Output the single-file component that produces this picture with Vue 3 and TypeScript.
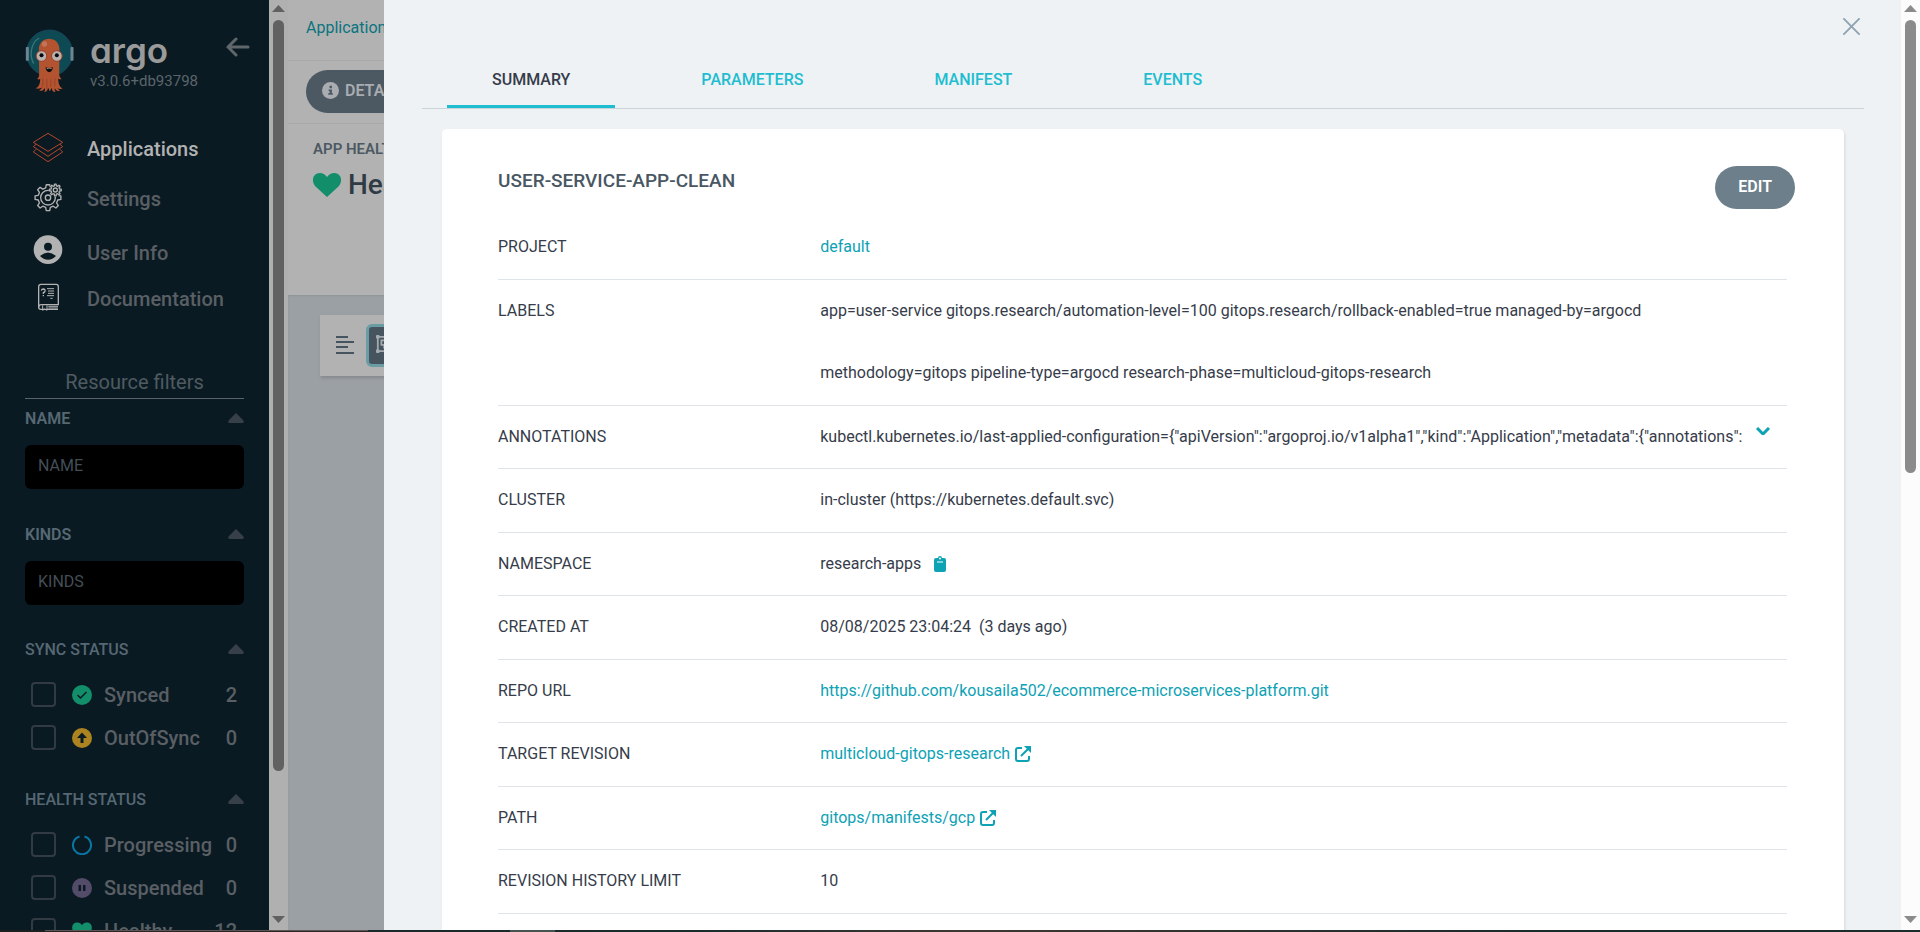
<script setup lang="ts">
import { ref } from 'vue'

interface StatusItem {
  name: string
  count: number
  icon: 'synced' | 'outofsync' | 'progressing' | 'suspended' | 'healthy'
}

interface DetailRow {
  label: string
  text: string
  href?: string
  icon?: 'copy' | 'external' | 'expand'
}

const name = ref('')
const kinds = ref('')
const activeTab = ref('SUMMARY')
const tabs = ['SUMMARY', 'PARAMETERS', 'MANIFEST', 'EVENTS']

const syncStatus: StatusItem[] = [
  { name: 'Synced', count: 2, icon: 'synced' },
  { name: 'OutOfSync', count: 0, icon: 'outofsync' },
]
const healthStatus: StatusItem[] = [
  { name: 'Progressing', count: 0, icon: 'progressing' },
  { name: 'Suspended', count: 0, icon: 'suspended' },
  { name: 'Healthy', count: 12, icon: 'healthy' },
]
const groups = [
  { title: 'SYNC STATUS', items: syncStatus },
  { title: 'HEALTH STATUS', items: healthStatus },
]

const rows: DetailRow[] = [
  { label: 'PROJECT', text: 'default', href: '#project' },
  {
    label: 'LABELS',
    text: 'app=user-service gitops.research/automation-level=100 gitops.research/rollback-enabled=true managed-by=argocd methodology=gitops pipeline-type=argocd research-phase=multicloud-gitops-research',
  },
  {
    label: 'ANNOTATIONS',
    text: 'kubectl.kubernetes.io/last-applied-configuration={"apiVersion":"argoproj.io/v1alpha1","kind":"Application","metadata":{"annotations":',
    icon: 'expand',
  },
  { label: 'CLUSTER', text: 'in-cluster (https://kubernetes.default.svc)' },
  { label: 'NAMESPACE', text: 'research-apps', icon: 'copy' },
  { label: 'CREATED AT', text: '08/08/2025 23:04:24\u00a0 (3 days ago)' },
  {
    label: 'REPO URL',
    text: 'https://github.com/kousaila502/ecommerce-microservices-platform.git',
    href: '#repo',
  },
  { label: 'TARGET REVISION', text: 'multicloud-gitops-research', href: '#revision', icon: 'external' },
  { label: 'PATH', text: 'gitops/manifests/gcp', href: '#path', icon: 'external' },
  { label: 'REVISION HISTORY LIMIT', text: '10' },
]

function gearPath(cx: number, cy: number, outer: number, inner: number, teeth: number): string {
  const step = (Math.PI * 2) / teeth
  const points: string[] = []
  for (let i = 0; i < teeth; i++) {
    const a = i * step - Math.PI / 2
    const corners: [number, number][] = [
      [inner, -0.3],
      [outer, -0.17],
      [outer, 0.17],
      [inner, 0.3],
    ]
    for (const [r, f] of corners) {
      points.push(`${(cx + r * Math.cos(a + f * step)).toFixed(1)} ${(cy + r * Math.sin(a + f * step)).toFixed(1)}`)
    }
  }
  return `M${points.join('L')}Z`
}
</script>

<template>
  <div class="page">
    <div class="workspace">
      <aside class="sidebar">
        <div class="brand">
          <svg class="mascot" viewBox="74 56 146 192" aria-hidden="true">
            <circle cx="147" cy="128" r="69" fill="#0d4a54" stroke="#1b4658" stroke-width="3" />
            <rect x="76" y="110" width="9" height="41" rx="2" fill="#6e8494" />
            <rect x="210" y="110" width="9" height="41" rx="2" fill="#6e8494" />
            <path d="M116 83C90 98 86 138 100 160" fill="none" stroke="#3d7476" stroke-width="4" />
            <path d="M115 120C113 74 179 74 177 120L176 194C178 202 182 205 183 206C177 209 174 205 173 205C174 225 180 231 187 234C180 238 174 235 171 232C173 236 175 239 179 241C171 244 166 240 163 234C162 240 164 243 165 245C157 245 154 240 154 232L148 243L143 232C141 240 138 244 132 245C134 240 134 237 133 233C129 240 123 243 116 241C121 238 123 235 124 231C118 236 112 236 105 234C114 230 119 223 119 205C117 208 113 208 110 205C114 203 116 198 116 192Z" fill="#b4532f" />
            <path d="M127 204V229M139 206V235M151 207V230M163 204V228" fill="none" stroke="#8d3d25" stroke-width="2" />
            <ellipse cx="132" cy="101" rx="8" ry="8" fill="#c4745a" />
            <circle cx="123" cy="137" r="16" fill="#b7b0ad" stroke="#993f2a" stroke-width="3" />
            <circle cx="169" cy="137" r="16" fill="#b7b0ad" stroke="#993f2a" stroke-width="3" />
            <circle cx="123" cy="135" r="6" fill="#05090b" />
            <circle cx="169" cy="135" r="6" fill="#05090b" />
            <path d="M135 170Q146 176 157 170Q156 185 146 186Q137 185 135 170Z" fill="#100f10" />
            <path d="M139 172Q146 177 153 172V176H139Z" fill="#b2b2b2" />
          </svg>
          <div class="brand-text">
            <span class="wordmark">argo</span>
            <span class="version">v3.0.6+db93798</span>
          </div>
          <button class="collapse" type="button" aria-label="Collapse sidebar">
            <svg viewBox="0 0 24 20"><path d="M22 10H2M10 2L2 10L10 18" /></svg>
          </button>
        </div>

        <nav class="nav">
          <a class="nav-item active" href="#applications">
            <svg viewBox="96 393 96 108" aria-hidden="true">
              <g fill="none" stroke="#b4472b" stroke-width="3" stroke-linejoin="round">
                <path d="M144 400L188 427L144 454L100 427Z" />
                <path d="M108 433L100 440L144 469L188 440L180 433" />
                <path d="M108 448L100 456L144 485L188 456L180 448" />
              </g>
            </svg>
            <span>Applications</span>
          </a>
          <a class="nav-item" href="#settings">
            <svg viewBox="96 543 96 108" aria-hidden="true">
              <g fill="none" stroke="#b2b2b2" stroke-width="4" stroke-linejoin="round">
                <path :d="gearPath(144, 593, 39, 30, 8)" />
                <circle cx="144" cy="593" r="22" />
                <circle cx="144" cy="593" r="8" />
                <circle cx="166" cy="570" r="20" fill="#0a1a22" stroke="none" />
                <path :d="gearPath(166, 570, 18, 13, 8)" fill="#0a1a22" />
                <circle cx="166" cy="570" r="6" />
              </g>
            </svg>
            <span>Settings</span>
          </a>
          <a class="nav-item tall" href="#user">
            <svg viewBox="96 705 96 108" aria-hidden="true">
              <circle cx="144" cy="749" r="43" fill="#b2b2b2" />
              <circle cx="144" cy="740" r="12" fill="#0a1a22" />
              <path d="M120 768Q144 747 168 768Q158 779 144 779Q130 779 120 768Z" fill="#0a1a22" />
            </svg>
            <span>User Info</span>
          </a>
          <a class="nav-item short" href="#docs">
            <svg viewBox="96 843 96 108" aria-hidden="true">
              <g fill="none" stroke="#b2b2b2" stroke-width="4">
                <path d="M174 928H122Q116 928 116 921V860Q116 853 123 853H169Q175 853 175 860V914H124Q117 914 117 920" />
                <path d="M145 919H174M145 924H174M128 916V931L134 927L141 931V916" stroke-width="3" />
                <path d="M141 866H162M144 873H162M144 880H162M141 887H162M151 895H158" stroke-width="3" />
                <path d="M124 872Q125 867 130 867Q136 868 135 873Q134 877 130 878V882M130 885V889" />
              </g>
            </svg>
            <span>Documentation</span>
          </a>
        </nav>

        <h2 class="filters-title">Resource filters</h2>

        <section class="filter">
          <div class="filter-head">
            <label for="filter-name">NAME</label>
            <svg viewBox="0 0 16 10" aria-hidden="true"><path d="M8 0L15 7Q17 10 14 10H2Q-1 10 1 7Z" /></svg>
          </div>
          <input id="filter-name" v-model="name" class="filter-input" type="text" placeholder="NAME" />
        </section>
        <section class="filter">
          <div class="filter-head">
            <label for="filter-kinds">KINDS</label>
            <svg viewBox="0 0 16 10" aria-hidden="true"><path d="M8 0L15 7Q17 10 14 10H2Q-1 10 1 7Z" /></svg>
          </div>
          <input id="filter-kinds" v-model="kinds" class="filter-input" type="text" placeholder="KINDS" />
        </section>

        <section v-for="group in groups" :key="group.title" class="status-group">
          <div class="filter-head">
            <h3>{{ group.title }}</h3>
            <svg viewBox="0 0 16 10" aria-hidden="true"><path d="M8 0L15 7Q17 10 14 10H2Q-1 10 1 7Z" /></svg>
          </div>
          <label v-for="item in group.items" :key="item.name" class="status-item">
            <input type="checkbox" />
            <svg viewBox="0 0 20 20" aria-hidden="true">
              <template v-if="item.icon === 'synced'">
                <circle cx="10" cy="10" r="10" fill="#128e6a" />
                <path d="M5.500 10L8.500 13L14.500 7" fill="none" stroke="#0a1a22" stroke-width="1.500" />
              </template>
              <template v-else-if="item.icon === 'outofsync'">
                <circle cx="10" cy="10" r="10" fill="#ab8421" />
                <path d="M10 4.500L15 10H11.500V15H8.500V10H5Z" fill="#0a1a22" />
              </template>
              <path
                v-else-if="item.icon === 'progressing'"
                d="M12.500 1.500A9 9 0 1 1 7.500 1.500"
                fill="none"
                stroke="#0977a6"
                stroke-width="2"
              />
              <template v-else-if="item.icon === 'suspended'">
                <circle cx="10" cy="10" r="10" fill="#534c69" />
                <path d="M6.500 7H9V13H6.500ZM11 7H13.500V13H11Z" fill="#0a1a22" />
              </template>
              <path
                v-else
                d="M10 19L1.500 10.500C-1 7.500 0 2 4.500 1.500C7 1 9 2.500 10 4C11 2.500 13 1 15.500 1.500C20 2 21 7.500 18.500 10.500Z"
                fill="#128e6a"
              />
            </svg>
            <span class="status-name">{{ item.name }}</span>
            <span class="status-count">{{ item.count }}</span>
          </label>
        </section>
      </aside>

      <div class="scrollbar dim">
        <svg viewBox="0 0 13 7" aria-hidden="true"><path d="M6.500 0L13 7H0Z" /></svg>
        <div class="track"><div class="thumb"></div></div>
        <svg viewBox="0 0 13 7" aria-hidden="true"><path d="M0 0H13L6.500 7Z" /></svg>
      </div>

      <main class="content">
        <div class="breadcrumb"><a href="#applications">Applications</a></div>
        <div class="actions">
          <button class="details" type="button">
            <svg viewBox="0 0 18 18" aria-hidden="true">
              <circle cx="9" cy="9" r="9" fill="#a9adb1" />
              <path d="M8 4H10.500V6.500H8ZM7 8H10.500V12H11.500V13.500H6.500V12H8V9.500H7Z" fill="#4c5963" />
            </svg>
            DETAILS
          </button>
        </div>
        <section class="health">
          <h3>APP HEALTH</h3>
          <p>
            <svg viewBox="0 0 28 24" aria-hidden="true">
              <path d="M14 24L2 13C-1 9 -1 4 3 1C7 -1 11 0 14 4C17 0 21 -1 25 1C29 4 29 9 26 13Z" fill="#128e6a" />
            </svg>
            Healthy
          </p>
        </section>
        <div class="canvas">
          <div class="toolbar">
            <button class="tool" type="button" aria-label="Compact view">
              <svg viewBox="0 0 18 18"><path d="M0 1H12M0 6H18M0 11H12M0 17H18" stroke="#46545f" stroke-width="2" /></svg>
            </button>
            <button class="tool selected" type="button" aria-label="Group nodes">
              <svg viewBox="0 0 20 20" fill="none" stroke="#a4a9ad" stroke-width="2">
                <path d="M2 2H18V18H2Z" /><path d="M6 6H12V11H6ZM9 11V14H15V9H12" />
                <path d="M0 2H4M0 18H4M2 0V4M2 16V20" stroke-width="3" />
              </svg>
            </button>
          </div>
        </div>
      </main>

      <div class="panel">
        <div class="panel-body">
          <div class="panel-top">
            <button class="close" type="button" aria-label="Close">
              <svg viewBox="0 0 18 18"><path d="M1 1L17 17M17 1L1 17" /></svg>
            </button>
          </div>
          <div class="tabs" role="tablist">
            <button
              v-for="tab in tabs"
              :key="tab"
              type="button"
              role="tab"
              class="tab"
              :class="{ current: tab === activeTab }"
              :aria-selected="tab === activeTab"
              @click="activeTab = tab"
            >
              {{ tab }}
            </button>
          </div>
          <section class="card">
            <header class="card-head">
              <h1>USER-SERVICE-APP-CLEAN</h1>
              <button class="edit" type="button">EDIT</button>
            </header>
            <dl class="rows">
              <div v-for="row in rows" :key="row.label" class="row" :class="{ clipped: row.icon === 'expand' }">
                <dt>{{ row.label }}</dt>
                <dd>
                  <a v-if="row.href" :href="row.href">{{ row.text }}</a>
                  <span v-else>{{ row.text }}</span>
                  <button v-if="row.icon === 'copy'" class="copy" type="button" aria-label="Copy namespace">
                    <svg viewBox="0 0 12 16">
                      <path d="M2 2H4A2 2 0 0 1 8 2H10Q12 2 12 4V14Q12 16 10 16H2Q0 16 0 14V4Q0 2 2 2Z" fill="#0da2b4" />
                      <path d="M3 6H9" stroke="#fff" /><circle cx="6" cy="2.500" r="1" fill="#fff" />
                    </svg>
                  </button>
                  <a v-if="row.icon === 'external'" class="external" :href="row.href" aria-label="Open in repository">
                    <svg viewBox="0 0 16 16">
                      <path d="M7 2H3Q1 2 1 4V13Q1 15 3 15H12Q14 15 14 13V10M6 10L13 3" fill="none" stroke="#0da2b4" stroke-width="2" />
                      <path d="M9 0H16V7L13.500 4.500L11.500 2.500Z" fill="#0da2b4" />
                    </svg>
                  </a>
                  <button v-if="row.icon === 'expand'" class="expand" type="button" aria-label="Expand annotations">
                    <svg viewBox="0 0 14 8"><path d="M1 1L7 7L13 1" /></svg>
                  </button>
                </dd>
              </div>
            </dl>
          </section>
        </div>
        <div class="scrollbar">
          <svg viewBox="0 0 13 7" aria-hidden="true"><path d="M6.500 0L13 7H0Z" /></svg>
          <div class="track"><div class="thumb"></div></div>
          <svg viewBox="0 0 13 7" aria-hidden="true"><path d="M0 0H13L6.500 7Z" /></svg>
        </div>
      </div>
    </div>
    <div class="taskbar"><span class="edge"></span><span class="search"></span><span class="gap"></span><span class="item"></span></div>
  </div>
</template>

<style>
body {
  margin: 0;
  overflow: hidden;
}
</style>

<style scoped>
.page {
  display: flex;
  flex-direction: column;
  height: 100vh;
  font-family: Roboto, 'Liberation Sans', sans-serif;
  font-size: 16px;
  color: #363c4a;
}
.page * {
  box-sizing: border-box;
}
h1, h2, h3, p, dl, dd {
  margin: 0;
}
button {
  font: inherit;
  border: 0;
  padding: 0;
  background: none;
  cursor: pointer;
}
a {
  text-decoration: none;
}
svg {
  display: block;
  flex: none;
}
.workspace {
  position: relative;
  display: flex;
  flex: 1;
  min-height: 0;
  overflow: hidden;
}

/* Sidebar */
.sidebar {
  flex: none;
  width: 269px;
  padding: 0 25px;
  overflow: hidden;
  background: #0a1a22;
}
.brand {
  display: flex;
  height: 124px;
  padding-top: 29px;
}
.mascot {
  width: 49px;
  height: 64px;
}
.brand-text {
  display: flex;
  flex: 1;
  flex-direction: column;
  padding-left: 16px;
}
.wordmark {
  font-family: Inter, sans-serif;
  font-feature-settings: 'cv11';
  font-size: 35px;
  font-weight: 600;
  line-height: 42px;
  color: #9a9a9a;
}
.version {
  font-size: 15px;
  line-height: 20px;
  color: #5b656b;
}
.collapse {
  align-self: flex-start;
  margin: 8px -6px 0 0;
}
.collapse svg {
  width: 24px;
  height: 20px;
  fill: none;
  stroke: #5f676b;
  stroke-width: 3;
  stroke-linecap: round;
}
.nav-item {
  display: flex;
  align-items: center;
  gap: 23px;
  height: 50px;
  padding-left: 7px;
  font-size: 20px;
  font-weight: 500;
  color: #595f64;
}
.nav-item.active {
  color: #b2b2b2;
}
.nav-item.tall {
  height: 58px;
}
.nav-item.short {
  height: 34px;
}
.nav-item svg {
  width: 32px;
  height: 36px;
}
.filters-title {
  margin-top: 50px;
  border-bottom: 1px solid #59636a;
  font-size: 20px;
  font-weight: 400;
  line-height: 32px;
  text-align: center;
  color: #4f5a61;
}
.filter {
  height: 116px;
}
.filter-head {
  display: flex;
  align-items: center;
  justify-content: space-between;
  height: 38px;
  font-weight: 500;
  color: #566873;
}
.filter-head label {
  font-weight: 600;
}
.filter-head h3 {
  font-size: 16px;
  font-weight: 500;
}
.filter-head svg {
  width: 16px;
  height: 10px;
  fill: #373f48;
}
.filter-input {
  display: block;
  width: 100%;
  height: 44px;
  margin-top: 8px;
  padding: 0 13px 3px;
  border: 0;
  border-radius: 6px;
  font: inherit;
  color: #45525b;
  background: #000;
}
.filter-input::placeholder {
  color: #434e56;
  opacity: 1;
}
.status-group {
  margin-bottom: 22px;
}
.status-group .filter-head {
  height: 36px;
  margin-bottom: 6px;
}
.status-item {
  display: flex;
  align-items: center;
  height: 43px;
  padding: 0 7px 0 6px;
  font-size: 20px;
  font-weight: 500;
  color: #595f64;
}
.status-item input {
  appearance: none;
  width: 25px;
  height: 25px;
  margin: 0;
  border: 2px solid #323b43;
  border-radius: 4px;
}
.status-item svg {
  width: 20px;
  height: 20px;
  margin: 0 12px 0 16px;
}
.status-name {
  flex: 1;
}

/* Scroll bars */
.scrollbar {
  display: flex;
  flex: none;
  flex-direction: column;
  align-items: center;
  width: 19px;
  padding: 5px 0 7px;
  background: #fcfcfc;
}
.scrollbar svg {
  width: 13px;
  height: 7px;
  fill: #8b8b8b;
}
.track {
  flex: 1;
  padding: 8px 0;
}
.thumb {
  width: 11px;
  height: 51%;
  border-radius: 6px;
  background: #8b8b8b;
}
.scrollbar.dim {
  background: #b0b0b0;
}
.scrollbar.dim svg {
  fill: #616161;
}
.scrollbar.dim .thumb {
  height: calc(100% * 11 / 13);
  background: #616161;
}

/* Page behind the panel */
.content {
  display: flex;
  flex: 1;
  flex-direction: column;
  background: #b2b2b2;
}
.breadcrumb {
  height: 61px;
  padding-left: 18px;
  border-bottom: 1px solid #a6a8aa;
  line-height: 56px;
}
.breadcrumb a {
  color: #0a7480;
}
.actions {
  height: 63px;
  padding: 9px 18px;
  border-bottom: 1px solid #a6a8aa;
}
.details {
  display: flex;
  align-items: center;
  gap: 6px;
  height: 43px;
  padding: 0 16px 2px;
  border-radius: 22px;
  font-weight: 600;
  color: #a9adb1;
  background: #4c5963;
}
.details svg {
  width: 17px;
  height: 17px;
}
.health {
  height: 171px;
  padding: 13px 25px;
}
.health h3 {
  font-size: 15px;
  font-weight: 600;
  line-height: 24px;
  color: #4c5963;
}
.health p {
  display: flex;
  align-items: center;
  gap: 7px;
  font-size: 28px;
  font-weight: 500;
  line-height: 48px;
  color: #2f3a44;
}
.health svg {
  width: 28px;
  height: 24px;
}
.canvas {
  flex: 1;
  padding: 20px 32px;
  background: #9ba0a4;
  box-shadow: inset 0 1px 2px #8e9396;
}
.toolbar {
  display: flex;
  align-items: center;
  gap: 12px;
  height: 61px;
  padding: 0 16px 1px;
  background: #b2b2b2;
  box-shadow: 1px 2px 3px #85898c;
}
.tool svg {
  width: 18px;
  height: 18px;
}
.tool.selected {
  width: 44px;
  height: 43px;
  padding: 0 7px 3px;
  border: 3px solid #699da3;
  border-radius: 6px;
  background: #46545f;
}

/* Sliding panel */
.panel {
  position: absolute;
  top: 0;
  right: 0;
  bottom: 0;
  display: flex;
  width: 80%;
  background: #eef2f5;
}
.panel-body {
  flex: 1;
  min-width: 0;
  padding: 0 37px 0 38px;
}
.panel-top {
  display: flex;
  justify-content: flex-end;
  height: 54px;
  padding: 18px 4px 0 0;
}
.close {
  align-self: flex-start;
}
.close svg {
  width: 17px;
  height: 17px;
  fill: none;
  stroke: #8fa4b1;
  stroke-width: 2;
  stroke-linecap: round;
}
.tabs {
  display: flex;
  gap: 41px;
  height: 55px;
  padding-left: 25px;
  border-bottom: 1px solid #c8d4d9;
}
.tab {
  padding: 0 45px;
  border-bottom: 3px solid transparent;
  font-weight: 500;
  color: #1fbdd0;
}
.tab.current {
  border-color: #1fbdd0;
  color: #363c4a;
}
.card {
  height: 900px;
  margin: 20px 20px 0;
  padding: 37px 57px 0 56px;
  border-radius: 5px;
  background: #fff;
  box-shadow: 1px 2px 3px rgba(0, 0, 0, 0.1);
}
.card-head {
  display: flex;
  justify-content: space-between;
  height: 50px;
  margin-right: -8px;
}
.card-head h1 {
  font-size: 19px;
  font-weight: 500;
  line-height: 30px;
  color: #495763;
}
.edit {
  height: 43px;
  padding: 0 23px 3px;
  border-radius: 22px;
  font-weight: 600;
  color: #fff;
  background: #6d7f8b;
}
.row {
  display: grid;
  grid-template-columns: 1fr 3fr;
  border-bottom: 1px solid #dee4e8;
  line-height: 62px;
}
.row:first-child,
.row:nth-child(even) {
  padding-bottom: 1px;
}
.row dd {
  display: flex;
  align-items: center;
  min-width: 0;
  padding-right: 19px;
}
.row a {
  color: #0da2b4;
}
.row.clipped dd {
  position: relative;
  white-space: nowrap;
}
.row.clipped dd span {
  overflow: hidden;
}
.copy {
  margin-left: 13px;
}
.copy svg {
  width: 12px;
  height: 16px;
}
.external {
  margin-left: 5px;
}
.external svg {
  width: 16px;
  height: 16px;
}
.expand {
  position: absolute;
  top: 21px;
  right: 17px;
}
.expand svg {
  width: 14px;
  height: 8px;
  fill: none;
  stroke: #0da2b4;
  stroke-width: 3;
}

/* Sliver of the desktop task bar */
.taskbar {
  display: flex;
  height: 2px;
  background: linear-gradient(90deg, #1b2526 0%, #192c2e 36%, #3f3832 50%, #1b2c2c 80%, #1b2c2c 100%);
}
.taskbar .edge {
  width: 45px;
  background: #1c1f20;
}
.taskbar .search {
  width: 323px;
  border-top: 1px solid #5b5654;
  background: #2b2625;
}
.taskbar .gap {
  width: 142px;
}
.taskbar .item {
  width: 45px;
  background: #46544f;
}
</style>
